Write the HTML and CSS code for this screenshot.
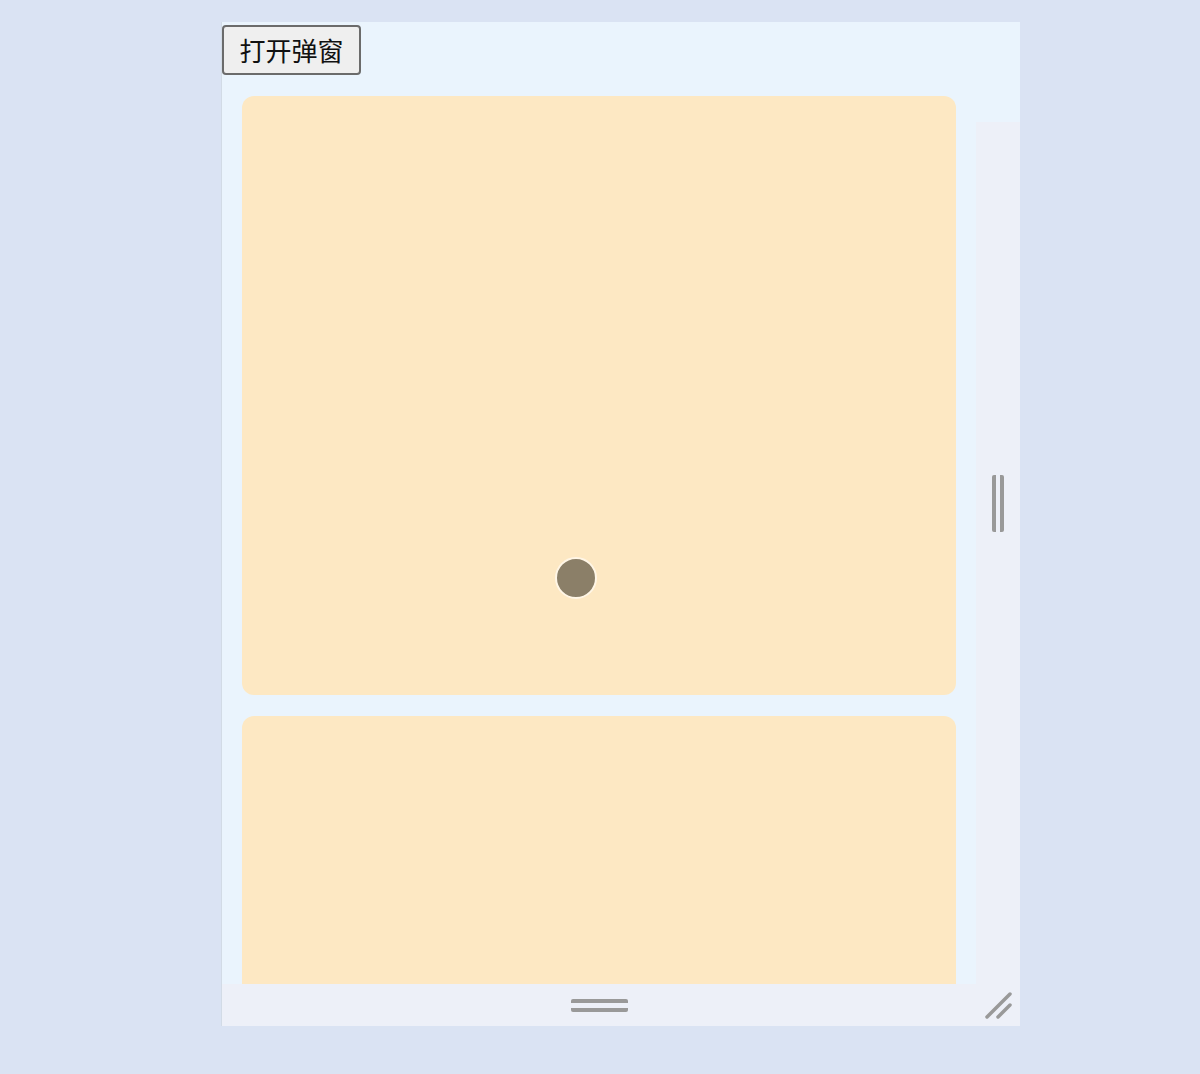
FILE: index.html
```html
<!DOCTYPE html>
<html lang="zh">
<head>
<meta charset="utf-8">
<link rel="stylesheet" href="styles.css">
</head>
<body>
<div class="panel">
  <div class="top">
    <div class="main">
      <button class="open-btn">打开弹窗</button>
      <div class="card card-first"><span class="dot"></span></div>
      <div class="card"></div>
    </div>
    <div class="side">
      <span class="vhandle"></span>
    </div>
  </div>
  <div class="bottom">
    <span class="hhandle"></span>
    <svg class="resize" width="30" height="30" viewBox="0 0 30 30">
      <line x1="3" y1="27" x2="26" y2="4" stroke="#999" stroke-width="3.5" stroke-linecap="round"/>
      <line x1="14" y1="27" x2="26" y2="15" stroke="#999" stroke-width="3.5" stroke-linecap="round"/>
    </svg>
  </div>
</div>
</body>
</html>
```
FILE: styles.css
```css
html, body {
  margin: 0;
  padding: 0;
  background: #dae3f3;
  width: 1200px;
  height: 1074px;
  overflow: hidden;
}
.panel {
  margin: 22px 0 0 222px;
  width: 798px;
  height: 1004px;
  background: #eaf4fd;
  display: flex;
  flex-direction: column;
  box-shadow: -1px 0 0 #d2dbe6;
}
.top {
  flex: 1;
  display: flex;
  min-height: 0;
}
.main {
  width: 754px;
  overflow: hidden;
  display: flex;
  flex-direction: column;
  align-items: flex-start;
}
.open-btn {
  flex-shrink: 0;
  margin-top: 3px;
  width: 139px;
  height: 50px;
  font-family: "Noto Sans CJK SC", "Noto Sans", sans-serif;
  font-size: 26px;
  color: #111;
  background: #efefef;
  border: 2px solid #6b6b6b;
  border-radius: 4px;
  padding: 0;
  line-height: 1;
}
.card {
  margin: 21px 0 0 20px;
  width: 714px;
  height: 599px;
  flex-shrink: 0;
  background: #fde8c3;
  border-radius: 12px;
  position: relative;
}
.dot {
  position: absolute;
  left: 313px;
  top: 461px;
  width: 38px;
  height: 38px;
  border-radius: 50%;
  background: #8b7f68;
  border: 2px solid #fff6e6;
}
.side {
  width: 44px;
  background: linear-gradient(to bottom, transparent 100px, #edf0f8 100px);
  display: flex;
  align-items: center;
  justify-content: center;
}
.vhandle {
  width: 12px;
  height: 57px;
  border-left: 4px solid #999;
  border-right: 4px solid #999;
  box-sizing: border-box;
  border-radius: 2px;
}
.bottom {
  height: 42px;
  background: #edf0f8;
  display: flex;
  align-items: center;
  justify-content: center;
  padding-right: 44px;
  position: relative;
}
.hhandle {
  width: 57px;
  height: 13px;
  margin-top: 1px;
  border-top: 4px solid #999;
  border-bottom: 4px solid #999;
  box-sizing: border-box;
  border-radius: 2px;
}
.resize {
  position: absolute;
  right: 6px;
  top: 6px;
}
```
